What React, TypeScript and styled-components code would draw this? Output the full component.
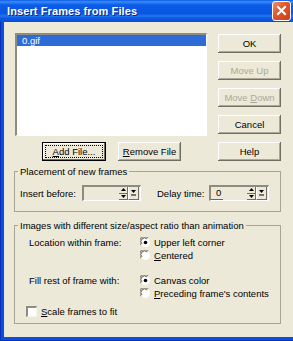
import React from 'react';
import styled, { createGlobalStyle } from 'styled-components';

const GlobalStyle = createGlobalStyle`
  html, body {
    margin: 0;
    padding: 0;
    background: #ffffff;
  }
  body {
    font-family: "Liberation Sans", Arial, sans-serif;
  }
`;

const Window = styled.div`
  width: 293px;
  height: 341px;
  display: flex;
  flex-direction: column;
  background: #0a4fdc;
  box-shadow: inset 1px 0 #0731b8, inset 0 -1px #0731b8;
`;

const TitleBar = styled.div`
  flex: none;
  height: 22px;
  display: flex;
  align-items: center;
  justify-content: space-between;
  padding: 0 2px 0 7px;
  background: linear-gradient(
    #0a5ae6 0%,
    #3b8cf6 8%,
    #0b5ce8 22%,
    #0756e2 62%,
    #2a72ee 72%,
    #0a58e2 84%,
    #074fd8 100%
  );
`;

const Title = styled.span`
  color: #ffffff;
  font: bold 11px "Liberation Sans", Arial, sans-serif;
  text-shadow: 1px 1px #0a2a8c;
  letter-spacing: 0.1px;
`;

const CloseButton = styled.div`
  width: 17px;
  height: 18px;
  margin-top: -1px;
  border: 1px solid #ffffff;
  border-radius: 3px;
  background: linear-gradient(135deg, #f0906e 0%, #e2582f 40%, #c7401c 100%);
  display: flex;
  align-items: center;
  justify-content: center;
`;

const Client = styled.div`
  flex: 1;
  margin: 0 0 4px 4px;
  background: #ece9d8;
  padding: 11px 12px 0 10px;
  display: flex;
  flex-direction: column;
  font-size: 9.5px;
  color: #000000;
`;

const TopGrid = styled.div`
  display: grid;
  grid-template-columns: 193px 63px;
  column-gap: 11px;
  row-gap: 6px;
`;

const FileList = styled.div`
  margin-left: 1px;
  height: 103px;
  box-sizing: border-box;
  background: #ffffff;
  border-top: 2px solid #8f8c7e;
  border-left: 2px solid #8f8c7e;
  border-right: 1px solid #ffffff;
  border-bottom: 1px solid #ffffff;
`;

const ListItem = styled.div<{ $selected?: boolean }>`
  height: 11px;
  line-height: 11px;
  padding-left: 5px;
  color: ${(p) => (p.$selected ? '#ffffff' : '#000000')};
  background: ${(p) => (p.$selected ? '#2e6bd6' : 'transparent')};
`;

const ButtonStack = styled.div`
  display: flex;
  flex-direction: column;
  gap: 8px;
  margin-top: 1px;
`;

const ButtonRow = styled.div`
  display: flex;
  justify-content: center;
  gap: 12px;
  padding-left: 2px;
`;

const Button = styled.button<{ $w?: number; $focused?: boolean }>`
  width: ${(p) => p.$w ?? 63}px;
  height: 19px;
  margin: 0;
  padding: 0;
  border: none;
  background: #ece9d8;
  font: 9.5px "Liberation Sans", Arial, sans-serif;
  color: #000000;
  box-shadow: ${(p) =>
    p.$focused
      ? 'inset 0 0 0 1px #000000, inset -2px -2px #716f64, inset 2px 2px #ffffff'
      : 'inset -1px -1px #716f64, inset 1px 1px #ffffff, inset -2px -2px #aca899'};
  outline: ${(p) => (p.$focused ? '1px dotted #000000' : 'none')};
  outline-offset: -4px;

  &:disabled {
    color: #aca899;
  }
`;

const Group = styled.fieldset<{ $gap: number }>`
  margin: ${(p) => p.$gap}px 0 0 0;
  padding: 0;
  border: 1px solid #a7a597;
  min-width: 0;
`;

const Legend = styled.legend`
  margin-left: 3px;
  padding: 0 2px;
  line-height: 11px;
`;

const PlacementRow = styled.div`
  display: flex;
  align-items: center;
  padding: 8px 0 10px 5px;
`;

const RowLabel = styled.span<{ $w: number; $gap?: number }>`
  width: ${(p) => p.$w}px;
  margin-left: ${(p) => p.$gap ?? 0}px;
  flex: none;
`;

const SpinField = styled.div<{ $w: number }>`
  width: ${(p) => p.$w}px;
  height: 16px;
  box-sizing: border-box;
  display: flex;
  border-top: 2px solid #8f8c7e;
  border-left: 2px solid #8f8c7e;
  border-right: 1px solid #ffffff;
  border-bottom: 1px solid #ffffff;
  padding-right: 1px;
`;

const SpinValue = styled.div`
  flex: 1;
  display: flex;
  flex-direction: column;
  justify-content: space-between;
  padding-left: 5px;
  line-height: 11px;
`;

const Selection = styled.div`
  width: 12px;
  height: 2px;
  margin-left: -5px;
  margin-top: 1px;
  background: #2e6bd6;
`;

const SpinArrows = styled.div`
  width: 9px;
  display: flex;
  flex-direction: column;
`;

const SpinHalf = styled.div`
  flex: 1;
  display: flex;
  align-items: center;
  justify-content: center;
  border-right: 1px solid #716f64;
  border-bottom: 1px solid #716f64;
`;

const DropButton = styled.div`
  width: 9px;
  display: flex;
  align-items: center;
  justify-content: center;
  border-right: 1px solid #716f64;
  border-bottom: 1px solid #716f64;
  border-left: 1px solid #ffffff;
`;

const OptionGrid = styled.div`
  display: grid;
  grid-template-columns: 111px auto;
  row-gap: 12px;
  padding: 5px 0 0 14px;
`;

const FieldLabel = styled.span`
  line-height: 13px;
`;

const RadioStack = styled.div`
  display: flex;
  flex-direction: column;
`;

const OptionRow = styled.label`
  display: flex;
  align-items: center;
  gap: 3px;
  height: 13px;
  line-height: 13px;
`;

const CheckRow = styled.label`
  display: flex;
  align-items: center;
  gap: 4px;
  height: 13px;
  line-height: 13px;
  margin: 5px 0 5px 11px;
`;

const CheckBox = styled.span`
  width: 11px;
  height: 11px;
  box-sizing: border-box;
  background: #ffffff;
  border-top: 2px solid #8f8c7e;
  border-left: 2px solid #8f8c7e;
  border-right: 1px solid #f4f3ee;
  border-bottom: 1px solid #f4f3ee;
`;

const Radio = ({ checked, children }: { checked?: boolean; children: React.ReactNode }) => (
  <OptionRow>
    <svg width="11" height="11" viewBox="0 0 11 11">
      <circle cx="5.5" cy="5.5" r="4.5" fill="#ffffff" />
      <path d="M1 8 A4.5 4.5 0 0 1 8 1" stroke="#8f8c7e" strokeWidth="1.2" fill="none" />
      <path d="M2 7 A3.5 3.5 0 0 1 7 2" stroke="#404040" strokeWidth="0.8" fill="none" />
      {checked && <circle cx="5.5" cy="5.5" r="1.8" fill="#000000" />}
    </svg>
    <span>{children}</span>
  </OptionRow>
);

const Arrow = ({ up }: { up?: boolean }) => (
  <svg width="5" height="3" viewBox="0 0 5 3">
    <path d={up ? 'M0 3 L2.5 0 L5 3 Z' : 'M0 0 L5 0 L2.5 3 Z'} fill="#000000" />
  </svg>
);

const Spinner = ({ width, value }: { width: number; value?: string }) => (
  <SpinField $w={width}>
    <SpinValue>
      <span>{value}</span>
      {value && <Selection />}
    </SpinValue>
    <SpinArrows>
      <SpinHalf>
        <Arrow up />
      </SpinHalf>
      <SpinHalf>
        <Arrow />
      </SpinHalf>
    </SpinArrows>
    <DropButton>
      <svg width="5" height="6" viewBox="0 0 5 6">
        <path d="M0 0 L5 0 L2.5 3 Z" fill="#000000" />
        <rect x="0" y="4.5" width="5" height="1" fill="#000000" />
      </svg>
    </DropButton>
  </SpinField>
);

export default function App() {
  return (
    <>
      <GlobalStyle />
      <Window>
        <TitleBar>
          <Title>Insert Frames from Files</Title>
          <CloseButton>
            <svg width="11" height="11" viewBox="0 0 11 11">
              <path d="M2 2 L9 9 M9 2 L2 9" stroke="#ffffff" strokeWidth="2" strokeLinecap="square" />
            </svg>
          </CloseButton>
        </TitleBar>
        <Client>
          <TopGrid>
            <FileList>
              <ListItem $selected>0.gif</ListItem>
            </FileList>
            <ButtonStack>
              <Button>OK</Button>
              <Button disabled>Move Up</Button>
              <Button disabled>
                Move <u>D</u>own
              </Button>
              <Button>Cancel</Button>
            </ButtonStack>
            <ButtonRow>
              <Button $w={64} $focused>
                <u>A</u>dd File...
              </Button>
              <Button>
                <u>R</u>emove File
              </Button>
            </ButtonRow>
            <Button>Help</Button>
          </TopGrid>

          <Group $gap={5}>
            <Legend>Placement of new frames</Legend>
            <PlacementRow>
              <RowLabel $w={62}>Insert before:</RowLabel>
              <Spinner width={59} />
              <RowLabel $w={52} $gap={16}>
                Delay time:
              </RowLabel>
              <Spinner width={60} value="0" />
            </PlacementRow>
          </Group>

          <Group $gap={8}>
            <Legend>Images with different size/aspect ratio than animation</Legend>
            <OptionGrid>
              <FieldLabel>Location within frame:</FieldLabel>
              <RadioStack>
                <Radio checked>Upper left corner</Radio>
                <Radio>
                  <u>C</u>entered
                </Radio>
              </RadioStack>
              <FieldLabel>Fill rest of frame with:</FieldLabel>
              <RadioStack>
                <Radio checked>Canvas color</Radio>
                <Radio>
                  <u>P</u>receding frame's contents
                </Radio>
              </RadioStack>
            </OptionGrid>
            <CheckRow>
              <CheckBox />
              <span>
                <u>S</u>cale frames to fit
              </span>
            </CheckRow>
          </Group>
        </Client>
      </Window>
    </>
  );
}
